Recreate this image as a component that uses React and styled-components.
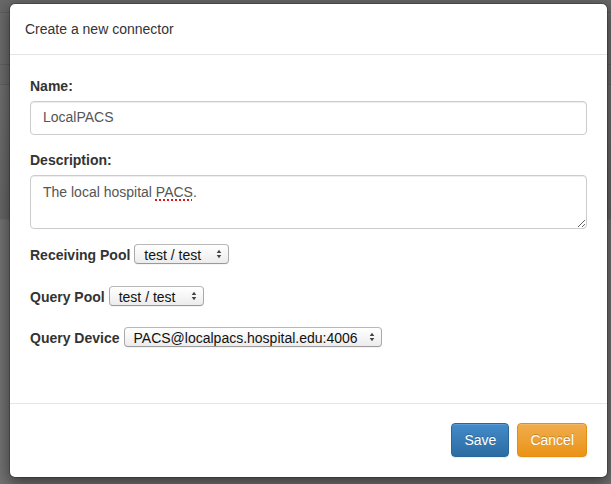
import React from "react";
import styled, { createGlobalStyle } from "styled-components";

const Global = createGlobalStyle`
  html, body { margin: 0; padding: 0; }
  body {
    font-family: "Liberation Sans", Arial, sans-serif;
    font-size: 14px;
    line-height: 20px;
    color: #333;
    background: #6b6b6b;
  }
  * { box-sizing: border-box; }
`;

const Backdrop = styled.div`
  min-height: 484px;
  padding: 3px 3px 0 9px;
  background: linear-gradient(
    to bottom,
    #686868 0px, #686868 12px,
    #5f5f5f 12px, #5f5f5f 13px,
    #6c6c6c 13px, #6c6c6c 64px,
    #616161 64px, #616161 65px,
    #6c6c6c 65px, #6c6c6c 84px,
    #626262 84px, #626262 85px,
    #6f6f6f 85px, #666666 219px,
    #727272 220px, #727272 100%
  );
`;

const Dialog = styled.div`
  width: 599px;
  background: #fff;
  border: 1px solid rgba(0, 0, 0, 0.2);
  border-radius: 6px;
  box-shadow: 0 5px 15px rgba(0, 0, 0, 0.5);
  background-clip: padding-box;
`;

const Header = styled.div`
  padding: 15px;
  border-bottom: 1px solid #e5e5e5;
`;

const Title = styled.h4`
  margin: 0;
  font-size: 14px;
  font-weight: normal;
  line-height: 20px;
  color: #333;
`;

const Body = styled.div`
  padding: 21px 20px 20px;
`;

const Group = styled.div`
  margin-bottom: 15px;
`;

const BlockLabel = styled.label`
  display: block;
  font-weight: bold;
  line-height: 20px;
  margin-bottom: 5px;
`;

const TextInput = styled.input`
  display: block;
  width: 100%;
  height: 34px;
  padding: 5px 12px 7px;
  font: inherit;
  font-size: 14px;
  line-height: 20px;
  color: #555;
  background: #fff;
  border: 1px solid #ccc;
  border-radius: 4px;
  box-shadow: inset 0 1px 1px rgba(0, 0, 0, 0.075);
  outline: none;
`;

const TextArea = styled.div`
  display: block;
  width: 100%;
  height: 54px;
  padding: 6px 12px;
  font-size: 14px;
  line-height: 20px;
  color: #555;
  background: #fff;
  border: 1px solid #ccc;
  border-radius: 4px;
  box-shadow: inset 0 1px 1px rgba(0, 0, 0, 0.075);
  overflow: auto;
  resize: vertical;
  outline: none;
`;

const Misspelled = styled.span`
  text-decoration: underline dotted #e0141e;
  text-decoration-thickness: 2px;
  text-underline-offset: 2px;
`;

const InlineRow = styled.div`
  display: flex;
  align-items: flex-start;
  gap: 4px;
  height: 20px;
  margin-bottom: ${(p) => (p.$last ? "21px" : "21.5px")};
`;

const InlineLabel = styled.label`
  font-weight: bold;
  line-height: 20px;
  padding-top: 1px;
`;

const SelectBox = styled.div`
  display: inline-flex;
  align-items: flex-start;
  justify-content: space-between;
  width: ${(p) => p.$width}px;
  height: 20px;
  padding: 0 6px 0 9px;
  border: 1px solid #a9a9a9;
  border-top-color: #b8b8b8;
  border-bottom-color: #9a9a9a;
  border-radius: 4px;
  background: linear-gradient(to bottom, #ffffff 0%, #f6f6f6 50%, #ececec 100%);
  box-shadow: 0 1px 0 rgba(0, 0, 0, 0.04);
`;

const SelectText = styled.span`
  font-size: 14px;
  line-height: 16px;
  padding-top: 2px;
  color: #111;
  white-space: nowrap;
`;

const Arrows = styled.svg`
  flex: none;
  display: block;
  align-self: center;
`;

const Footer = styled.div`
  margin-top: 15px;
  padding: 19px 20px 20px;
  border-top: 1px solid #e5e5e5;
  display: flex;
  justify-content: flex-end;
  gap: 8px;
`;

const Button = styled.button`
  height: 34px;
  padding: 6px 12px;
  font-family: inherit;
  font-size: 14px;
  line-height: 20px;
  color: #fff;
  border: 1px solid ${(p) => (p.$variant === "primary" ? "#2b669a" : "#e38d13")};
  border-radius: 4px;
  text-shadow: 0 -1px 0 rgba(0, 0, 0, 0.2);
  box-shadow: inset 0 1px 0 rgba(255, 255, 255, 0.15), 0 1px 1px rgba(0, 0, 0, 0.075);
  background-image: ${(p) =>
    p.$variant === "primary"
      ? "linear-gradient(to bottom, #428bca 0, #2d6ca2 100%)"
      : "linear-gradient(to bottom, #f0ad4e 0, #eb9316 100%)"};
  cursor: pointer;
`;

const UpDown = () => (
  <Arrows width="6" height="10" viewBox="0 0 6 10" aria-hidden="true">
    <path d="M0.7 4 L3 0.8 L5.3 4 Z M0.7 6 L3 9.2 L5.3 6 Z" fill="#444" />
  </Arrows>
);

const Select = ({ value, width }) => (
  <SelectBox $width={width} role="combobox" aria-label={value}>
    <SelectText>{value}</SelectText>
    <UpDown />
  </SelectBox>
);

export default function App() {
  return (
    <>
      <Global />
      <Backdrop>
        <Dialog role="dialog" aria-labelledby="dlg-title">
          <Header>
            <Title id="dlg-title">Create a new connector</Title>
          </Header>
          <Body>
            <Group>
              <BlockLabel htmlFor="name">Name:</BlockLabel>
              <TextInput id="name" defaultValue="LocalPACS" spellCheck={false} />
            </Group>
            <Group>
              <BlockLabel>Description:</BlockLabel>
              <TextArea
                role="textbox"
                aria-multiline="true"
                contentEditable
                suppressContentEditableWarning
                spellCheck={false}
              >
                The local hospital <Misspelled>PACS</Misspelled>.
              </TextArea>
            </Group>
            <InlineRow>
              <InlineLabel>Receiving Pool</InlineLabel>
              <Select value="test / test" width={95} />
            </InlineRow>
            <InlineRow>
              <InlineLabel>Query Pool</InlineLabel>
              <Select value="test / test" width={95} />
            </InlineRow>
            <InlineRow $last>
              <InlineLabel>Query Device</InlineLabel>
              <Select value="PACS@localpacs.hospital.edu:4006" width={258} />
            </InlineRow>
          </Body>
          <Footer>
            <Button $variant="primary">Save</Button>
            <Button $variant="warning">Cancel</Button>
          </Footer>
        </Dialog>
      </Backdrop>
    </>
  );
}
